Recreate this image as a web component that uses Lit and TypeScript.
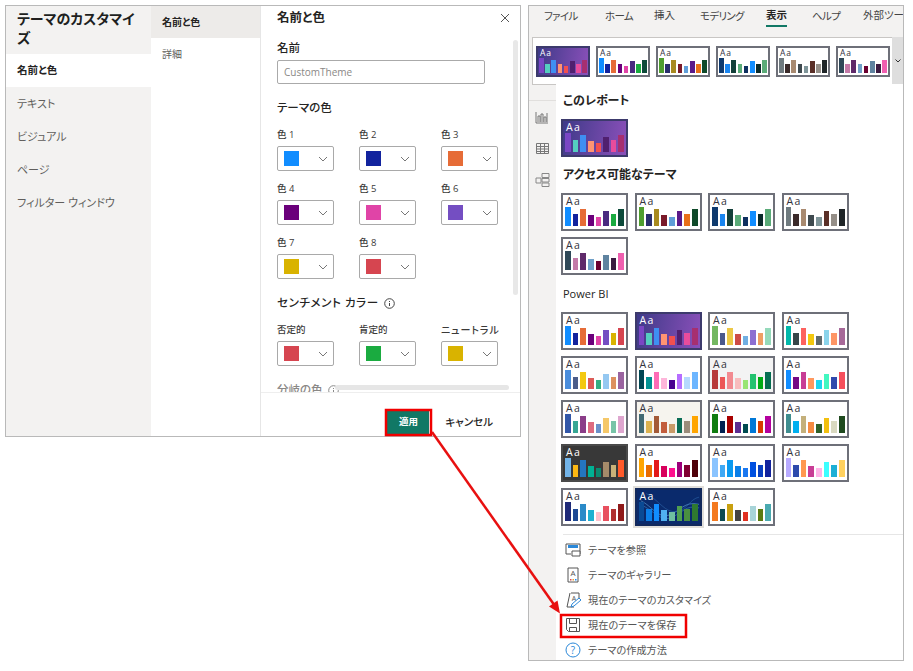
import { LitElement, html, css, svg, nothing } from 'lit';
import { customElement, property } from 'lit/decorators.js';

const BAR_HEIGHTS = [100, 63, 89, 58, 47, 79, 63, 89];

interface Theme {
  colors: string[];
  bg?: string;
  light?: boolean;
  wave?: boolean;
  selected?: boolean;
  edge?: string;
}

const PURPLE: Theme = {
  colors: ['#7a46c4', '#55cdc0', '#3f8ff2', '#ff9472', '#f24f4f', '#50206f', '#e84c9c', '#a62f70'],
  bg: 'linear-gradient(100deg, #3e3a88, #8b50ba)',
  light: true,
  edge: '#3c3a6c',
};
const DEFAULT_THEME = ['#118dff', '#12239e', '#e66c37', '#6b007b', '#e044a7', '#744ec2', '#d9b300', '#d64550'];
const A1 = ['#118dff', '#12239e', '#e66c37', '#6b007b', '#e044a7', '#4a2a80', '#1aab40', '#0d4a3a'];
const A2 = ['#4f9e2f', '#2a2f6e', '#a88a20', '#7a1a2a', '#5f9ed8', '#5a1a8a', '#e8701a', '#0f4a2a'];
const A3 = ['#0f3a6e', '#1a85f0', '#14403a', '#5aab78', '#0f3060', '#118dff', '#0a2a2a', '#5aab78'];
const A4 = ['#6f7a7f', '#3a2a2a', '#a88a70', '#3f4a4f', '#7f9599', '#5a3028', '#958f88', '#1f2528'];
const A5 = ['#2f4858', '#c47aa8', '#5f2a6a', '#6fa0c8', '#6a0030', '#5f83a0', '#3a1a40', '#f05fb0'];

const RIBBON: Theme[] = [PURPLE, { colors: A1 }, { colors: A2 }, { colors: A3 }, { colors: A4 }, { colors: A5 }];
const ACCESSIBLE: Theme[] = [{ colors: A1 }, { colors: A2 }, { colors: A3 }, { colors: A4 }, { colors: A5 }];
const POWER_BI: Theme[] = [
  { colors: DEFAULT_THEME },
  PURPLE,
  { colors: ['#73b761', '#4a588a', '#ecc846', '#cd4c46', '#71afe2', '#8d6fd1', '#ee9e64', '#95dabb'] },
  { colors: ['#01b8aa', '#374649', '#fd625e', '#f2c80f', '#5f6b6d', '#8ad4eb', '#fe9666', '#a66999'] },
  { colors: ['#4a8ddc', '#4c5d8a', '#f3c911', '#dc5b57', '#33ae81', '#95c8f1', '#dd915f', '#9a64a0'] },
  { colors: ['#004753', '#009292', '#fe6db6', '#feb5da', '#480091', '#b66dff', '#b5dafe', '#6db6ff'] },
  { colors: ['#b73a3a', '#ec5656', '#f28a90', '#f8bcbd', '#99e472', '#23c26f', '#00ab14', '#056d51'], bg: '#f3f3f3' },
  { colors: ['#118dff', '#750985', '#c83d95', '#ff985e', '#1dd5ee', '#42f7c0', '#3049ad', '#f64f5c'] },
  { colors: ['#3257a8', '#37a794', '#8b3d88', '#dd6b7f', '#6b91c9', '#f5c869', '#77c4a8', '#dea6cf'] },
  { colors: ['#426a73', '#dcb14e', '#a35a37', '#c25d3c', '#c99a67', '#0a6d55', '#9a8c7a', '#ffa500'], bg: '#f6f4ee' },
  { colors: ['#107c10', '#002050', '#a80000', '#5c2d91', '#004b50', '#0078d7', '#d83b01', '#b4009e'] },
  { colors: ['#3f8d8f', '#00b0f0', '#c4b07b', '#f58b42', '#2f6027', '#f2c00f', '#d9d9c0', '#1f4a1f'] },
  { colors: ['#73b4e8', '#fdb813', '#2476c0', '#00b294', '#0a8a70', '#a58b6a', '#c9b178', '#ff5a2a'], bg: '#383838', light: true, edge: '#4a4a4a' },
  { colors: ['#ffa500', '#e86c00', '#e31a1a', '#d8005c', '#ff0f8f', '#9c007a', '#800032', '#4f0008'] },
  { colors: ['#8ac4ff', '#3fa9f5', '#0a9af0', '#0a7fe8', '#1a78f0', '#0050e0', '#0a40c0', '#12239e'] },
  { colors: ['#b7aaff', '#2d4aac', '#ff9850', '#c83d95', '#ffb5e8', '#3dffff', '#1dafd5', '#ffd15f'] },
  { colors: ['#1f2a78', '#1f4a94', '#2a8ac8', '#20b0d0', '#ffc0cb', '#e8505f', '#b03030', '#8f1a1a'] },
  {
    colors: ['#0a4a94', '#0a7fe8', '#118dff', '#50b0f0', '#6fc0a0', '#4f9f50', '#4a8f40', '#2f7a30'],
    bg: '#0a2a6c',
    light: true,
    wave: true,
    selected: true,
    edge: '#12295c',
  },
  { colors: ['#f47a20', '#0a4a50', '#c8a010', '#444444', '#e03020', '#a8d4d8', '#5a7a10', '#4aaab0'] },
];

@customElement('theme-thumb')
class ThemeThumb extends LitElement {
  @property({ attribute: false }) theme: Theme = { colors: [] };
  @property({ type: Boolean, reflect: true }) small = false;

  static styles = css`
    :host {
      display: block;
      box-sizing: border-box;
      width: 67px;
      height: 38px;
      border: 2px solid #6e7079;
      overflow: hidden;
    }
    :host([small]) {
      width: 54px;
      height: 31px;
    }
    .face {
      position: relative;
      height: 100%;
      display: flex;
      flex-direction: column;
      background: #fff;
      padding: 0 2px 3px 2px;
      box-sizing: border-box;
    }
    :host([small]) .face {
      padding: 0 1px 2px 1px;
    }
    .aa {
      font: 10.5px/12px 'Open Sans', sans-serif;
      letter-spacing: 1.4px;
      color: #33333d;
      flex: none;
      padding-left: 1px;
      position: relative;
    }
    :host([small]) .aa {
      font-size: 8.5px;
      line-height: 10px;
      letter-spacing: 1px;
    }
    .light .aa {
      color: #fff;
    }
    .bars {
      flex: 1;
      min-height: 0;
      display: flex;
      align-items: flex-end;
      gap: 2px;
      position: relative;
    }
    :host([small]) .bars {
      gap: 1.5px;
    }
    .bars div {
      flex: 1;
    }
    .wave {
      position: absolute;
      inset: 0;
      width: 100%;
      height: 100%;
    }
  `;

  render() {
    const t = this.theme;
    return html`<div class="face ${t.light ? 'light' : ''}" style=${t.bg ? `background:${t.bg}` : ''}>
      ${t.wave
        ? html`<svg class="wave" viewBox="0 0 67 38" preserveAspectRatio="none" fill="none">
            <path d="M4 12C16 18 22 32 34 28S50 12 66 16" stroke="#5f9fd8" stroke-width=".7" />
            <path d="M2 16C16 20 24 36 36 31S52 16 66 20" stroke="#3f7fc0" stroke-width=".7" />
            <path d="M10 4C24 12 30 26 42 24S56 10 66 8" stroke="#2f6aae" stroke-width=".6" />
          </svg>`
        : nothing}
      <div class="aa">Aa</div>
      <div class="bars">
        ${t.colors.map((c, i) => html`<div style="height:${BAR_HEIGHTS[i]}%;background:${c}"></div>`)}
      </div>
    </div>`;
  }
}

const chevron = html`<svg width="10" height="6" viewBox="0 0 10 6" fill="none" stroke="#777" stroke-width="1">
  <path d="M1 1l4 4 4-4" />
</svg>`;

const infoIcon = html`<svg class="info" width="11" height="11" viewBox="0 0 11 11" fill="none" stroke="#444">
  <circle cx="5.5" cy="5.5" r="4.8" />
  <path d="M5.5 5v3M5.5 3v1" />
</svg>`;

const RAIL_ICONS = [
  svg`<path d="M1 13V2M1 13h12M3 12V6h2v6M6 12V4h2v8M9 12V7h2v5M12 12V3" stroke="#777" fill="none" />`,
  svg`<path d="M1.5 2.5h12v10h-12zM1.5 5.5h12M1.5 8h12M1.5 10.5h12M5.5 2.5v10M9.5 2.5v10" stroke="#777" fill="none" />`,
  svg`<path d="M1 6h5v5H1zM7 1.5h7v4H7zM7 6.5h7v3.500H7zM7 11h7v3.500H7z" stroke="#888" fill="none" />`,
];

const MENU_ITEMS = [
  {
    label: 'テーマを参照',
    icon: svg`<path d="M1 2h14v10H9" stroke="#555" fill="none" /><path d="M1 2v10h5" stroke="#555" fill="none" /><path d="M3 3h10v3H3z" fill="#2b88d8" /><path d="M7 9h8v5H7z" fill="#fff" stroke="#555" />`,
  },
  {
    label: 'テーマのギャラリー',
    icon: svg`<path d="M3 1h10v14H3z" fill="none" stroke="#555" /><text x="8" y="9" font-size="8" text-anchor="middle" fill="#555" font-family="Open Sans">A</text><path d="M5 12h1.500v1.500H5z" fill="#d64550" /><path d="M7.500 12H9v1.500H7.500z" fill="#e6a537" /><path d="M10 12h1.500v1.500H10z" fill="#118dff" />`,
  },
  {
    label: '現在のテーマのカスタマイズ',
    icon: svg`<path d="M6 1h8v5M2 15l3-14M2 15h7" stroke="#555" fill="none" /><text x="9" y="8.500" font-size="7" text-anchor="middle" fill="#555" font-family="Open Sans">A</text><path d="M6 15l1-3 7-6 2 2-7 6z" fill="#fff" stroke="#2b88d8" />`,
  },
  {
    label: '現在のテーマを保存',
    icon: svg`<path d="M1.500 1.500h13v13h-11l-2-2z" fill="none" stroke="#555" /><path d="M4.500 1.500v5h7v-5M4.500 14.500v-4h7v4" fill="none" stroke="#555" />`,
  },
  {
    label: 'テーマの作成方法',
    icon: svg`<circle cx="8" cy="8" r="7" fill="none" stroke="#2b88d8" /><text x="8" y="11.500" font-size="10" text-anchor="middle" fill="#2b88d8" font-family="Open Sans">?</text>`,
  },
];

// left edge of each ribbon tab, measured from the window's inner edge
const TABS: { label: string; x: number; on?: boolean; kana?: boolean }[] = [
  { label: 'ファイル', x: 15, kana: true },
  { label: 'ホーム', x: 76, kana: true },
  { label: '挿入', x: 125 },
  { label: 'モデリング', x: 171, kana: true },
  { label: '表示', x: 237, on: true },
  { label: 'ヘルプ', x: 283, kana: true },
  { label: '外部ツール', x: 334 },
];

@customElement('app-root')
class AppRoot extends LitElement {
  static styles = css`
    :host {
      display: block;
      position: relative;
      width: 913px;
      height: 671px;
      overflow: hidden;
      background: #fff;
      font-family: 'Open Sans', 'Noto Sans CJK JP', sans-serif;
      font-feature-settings: 'palt';
      color: #252423;
    }
    .desk {
      display: flex;
      align-items: flex-start;
      gap: 7px;
      padding: 5px 0 0 5px;
    }
    .window {
      box-sizing: border-box;
      border: 1px solid #b9b9b9;
      background: #fff;
      overflow: hidden;
    }

    /* customise dialog */
    .dialog {
      width: 516px;
      height: 432px;
      display: flex;
    }
    .side {
      width: 145px;
      flex: none;
      background: #f3f2f1;
    }
    .side h1 {
      margin: 0;
      padding: 3px 11px 7px;
      font-size: 14px;
      line-height: 19px;
      font-weight: 700;
      color: #201f1e;
    }
    .side-item {
      height: 33px;
      line-height: 33px;
      padding-left: 11px;
      font-size: 11px;
      color: #605e5c;
    }
    .side-item.on {
      background: #fff;
      font-size: 10.5px;
      font-weight: 700;
      color: #252423;
    }
    .sub {
      width: 109px;
      flex: none;
      border-right: 1px solid #e6e6e6;
    }
    .sub-item {
      height: 32px;
      line-height: 32px;
      padding-left: 11px;
      font-size: 10px;
      color: #605e5c;
    }
    .sub-item.on {
      background: #edebe9;
      font-weight: 700;
      color: #252423;
    }
    .main {
      flex: 1;
      min-width: 0;
      position: relative;
      display: flex;
      flex-direction: column;
    }
    .content {
      flex: 1;
      min-height: 0;
      overflow: hidden;
      padding: 4px 0 0 16px;
    }
    h2 {
      margin: 0;
      font-size: 12.5px;
      line-height: 16px;
      font-weight: 700;
    }
    h3 {
      margin: 0;
      font-size: 11.5px;
      line-height: 16px;
      font-weight: 500;
      display: flex;
      align-items: center;
      gap: 5px;
      white-space: nowrap;
    }
    .close {
      position: absolute;
      top: 7px;
      right: 10px;
    }
    h3.field-name {
      margin-top: 14px;
    }
    .name-input {
      box-sizing: border-box;
      width: 208px;
      height: 24px;
      margin-top: 4px;
      border: 1px solid #aaa;
      border-radius: 2px;
      padding-left: 6px;
      line-height: 22px;
      font-size: 10px;
      color: #8a8886;
    }
    h3.section {
      margin-top: 16px;
    }
    h3.spaced {
      letter-spacing: 0.6px;
    }
    .swatches {
      display: grid;
      grid-template-columns: repeat(3, 57px);
      column-gap: 25px;
      row-gap: 10px;
      margin-top: 11px;
    }
    .swatch-label {
      font-size: 9.5px;
      line-height: 16px;
      font-weight: 500;
      color: #3b3a39;
      white-space: nowrap;
      margin-bottom: 3px;
    }
    .swatch-label.wide {
      font-size: 10px;
      letter-spacing: 0.9px;
    }
    .swatch-box {
      box-sizing: border-box;
      height: 25px;
      border: 1px solid #a9a9a9;
      border-radius: 2px;
      display: flex;
      align-items: center;
      justify-content: space-between;
      padding: 0 5px 0 6px;
    }
    .swatch-box span {
      width: 15px;
      height: 15px;
    }
    h3.diverging {
      margin-top: 16px;
      color: #8a8886;
    }
    h3.diverging svg {
      stroke: #888;
    }
    .vbar {
      position: absolute;
      left: 252px;
      top: 34px;
      width: 5px;
      height: 255px;
      background: #e8e8e8;
      border-radius: 3px;
    }
    .hbar {
      position: absolute;
      left: 74px;
      top: 379px;
      width: 174px;
      height: 5px;
      background: #e6e6e6;
      border-radius: 3px;
    }
    .foot {
      flex: none;
      box-sizing: border-box;
      height: 44px;
      border-top: 1px solid #eee;
      background: #fff;
      position: relative;
      display: flex;
      justify-content: flex-end;
      align-items: flex-start;
      gap: 16px;
      padding: 18px 27px 0 0;
    }
    .apply {
      width: 42px;
      height: 23px;
      line-height: 22px;
      text-align: center;
      background: #117865;
      color: #fff;
      font-size: 9.5px;
      font-weight: 700;
    }
    .cancel {
      line-height: 22px;
      font-size: 10.5px;
      font-weight: 500;
      color: #252423;
    }

    /* ribbon window */
    .ribbon {
      width: 376px;
      height: 656px;
      background: #f3f2f1;
      display: flex;
      flex-direction: column;
    }
    .tabs {
      flex: none;
      height: 31px;
      display: flex;
      white-space: nowrap;
      overflow: hidden;
      font-size: 10.5px;
      color: #444;
    }
    .tab-slot {
      flex: none;
      width: 0;
    }
    .tab {
      display: inline-block;
      position: relative;
      line-height: 18px;
    }
    .tab.kana {
      letter-spacing: -0.7px;
      margin-top: 1px;
    }
    .tab.on {
      font-weight: 700;
      color: #252423;
    }
    .tab.on::after {
      content: '';
      position: absolute;
      left: 0;
      right: 0;
      top: 19px;
      height: 2px;
      background: #117865;
    }
    .gallery {
      flex: none;
      box-sizing: border-box;
      margin-left: 3px;
      height: 48px;
      background: #fff;
      border: 1px solid #c8c6c4;
      border-right: 0;
      display: flex;
      gap: 6px;
      padding: 8px 0 0 3px;
      position: relative;
    }
    .gallery-more {
      position: absolute;
      right: 0;
      top: -1px;
      width: 11px;
      height: 48px;
      background: #dedede;
      display: flex;
      align-items: center;
      justify-content: center;
    }
    .below {
      flex: 1;
      min-height: 0;
      display: flex;
    }
    .rail {
      width: 27px;
      flex: none;
      display: flex;
      flex-direction: column;
      align-items: center;
      gap: 16px;
      padding-top: 25px;
      position: relative;
    }
    .rail::before {
      content: '';
      position: absolute;
      left: 0;
      right: 0;
      top: 15px;
      height: 1px;
      background: #e1dfdd;
    }
    .panel {
      flex: 1;
      min-width: 0;
      background: #fff;
      padding: 9px 0 0 5px;
      margin-top: -1px;
      position: relative;
    }
    .panel h4 {
      margin: 0 0 0 2px;
      font-size: 12px;
      line-height: 16px;
      font-weight: 700;
      color: #252423;
    }
    .panel h4.plain {
      font-weight: 500;
      font-size: 11px;
      margin-top: 11px;
    }
    .themes {
      display: grid;
      grid-template-columns: repeat(4, 67px);
      column-gap: 6.5px;
      row-gap: 6px;
      margin: 10px 0;
    }
    .themes + .plain + .themes {
      margin-bottom: 8px;
    }
    .themes theme-thumb.selected {
      box-shadow: 0 0 0 2px #e1dfdb;
    }
    .sep {
      height: 1px;
      background: #e6e6e6;
      margin: 0 0 2px 2px;
    }
    .menu-item {
      height: 25px;
      display: flex;
      align-items: center;
      gap: 7px;
      padding-left: 4px;
      font-size: 10.2px;
      color: #555;
    }
    .annotations {
      position: absolute;
      inset: 0;
      width: 913px;
      height: 671px;
      pointer-events: none;
    }
  `;

  private swatch(label: string, color: string, wide = false) {
    return html`<div>
      <div class="swatch-label ${wide ? 'wide' : ''}">${label}</div>
      <div class="swatch-box"><span style="background:${color}"></span>${chevron}</div>
    </div>`;
  }

  private thumb(t: Theme, small = false) {
    return html`<theme-thumb
      class=${t.selected ? 'selected' : ''}
      style=${t.edge ? `border-color:${t.edge}` : ''}
      ?small=${small}
      .theme=${t}
    ></theme-thumb>`;
  }

  private thumbs(list: Theme[]) {
    return html`<div class="themes">${list.map((t) => this.thumb(t))}</div>`;
  }

  render() {
    return html`
      <div class="desk">
        <section class="window dialog">
          <div class="side">
            <h1>テーマのカスタマイズ</h1>
            <div class="side-item on">名前と色</div>
            <div class="side-item">テキスト</div>
            <div class="side-item">ビジュアル</div>
            <div class="side-item">ページ</div>
            <div class="side-item">フィルター ウィンドウ</div>
          </div>
          <div class="sub">
            <div class="sub-item on">名前と色</div>
            <div class="sub-item">詳細</div>
          </div>
          <div class="main">
            <div class="content">
              <h2>名前と色</h2>
              <h3 class="field-name">名前</h3>
              <div class="name-input">CustomTheme</div>
              <h3 class="section">テーマの色</h3>
              <div class="swatches">
                ${this.swatch('色 1', '#118dff')} ${this.swatch('色 2', '#12239e')} ${this.swatch('色 3', '#e66c37')}
                ${this.swatch('色 4', '#6b007b')} ${this.swatch('色 5', '#e044a7')} ${this.swatch('色 6', '#744ec2')}
                ${this.swatch('色 7', '#d9b300')} ${this.swatch('色 8', '#d64550')}
              </div>
              <h3 class="section spaced">センチメント カラー ${infoIcon}</h3>
              <div class="swatches">
                ${this.swatch('否定的', '#d64550')} ${this.swatch('肯定的', '#1aab40')}
                ${this.swatch('ニュートラル', '#d9b300', true)}
              </div>
              <h3 class="diverging">分岐の色 ${infoIcon}</h3>
            </div>
            <svg class="close" width="10" height="10" viewBox="0 0 10 10" stroke="#555" fill="none">
              <path d="M1 1l8 8M9 1L1 9" />
            </svg>
            <div class="vbar"></div>
            <div class="hbar"></div>
            <div class="foot">
              <div class="apply">適用</div>
              <div class="cancel">キャンセル</div>
            </div>
          </div>
        </section>

        <section class="window ribbon">
          <div class="tabs">
            ${TABS.map((t, i) => {
              const gap = t.x - (i ? TABS[i - 1].x : 0);
              return html`<div class="tab-slot" style="margin-left:${gap}px">
                <div class="tab ${t.on ? 'on' : ''} ${t.kana ? 'kana' : ''}">${t.label}</div>
              </div>`;
            })}
          </div>
          <div class="gallery">
            ${RIBBON.map((t) => this.thumb(t, true))}
            <div class="gallery-more">
              <svg width="6" height="4" viewBox="0 0 6 4" fill="none" stroke="#333"><path d="M.5.5L3 3 5.500.5" /></svg>
            </div>
          </div>
          <div class="below">
            <div class="rail">
              ${RAIL_ICONS.map((i) => html`<svg width="15" height="15" viewBox="0 0 15 15">${i}</svg>`)}
            </div>
            <div class="panel">
              <h4>このレポート</h4>
              ${this.thumbs([PURPLE])}
              <h4>アクセス可能なテーマ</h4>
              ${this.thumbs(ACCESSIBLE)}
              <h4 class="plain">Power BI</h4>
              ${this.thumbs(POWER_BI)}
              <div class="sep"></div>
              ${MENU_ITEMS.map(
                (m) => html`<div class="menu-item">
                  <svg width="16" height="16" viewBox="0 0 16 16" style="flex:none">${m.icon}</svg>
                  ${m.label}
                </div>`,
              )}
            </div>
          </div>
        </section>
      </div>

      <svg class="annotations" viewBox="0 0 913 671" fill="none">
        <rect x="386" y="410" width="45" height="25" stroke="#f00000" stroke-width="2.500" />
        <rect x="561" y="615" width="125" height="22" stroke="#f00000" stroke-width="2.500" />
        <path d="M432 432L555 606" stroke="#e81010" stroke-width="2.500" />
        <path d="M560 613.500L549 606.500L557.500 600.500z" fill="#e81010" />
      </svg>
    `;
  }
}
